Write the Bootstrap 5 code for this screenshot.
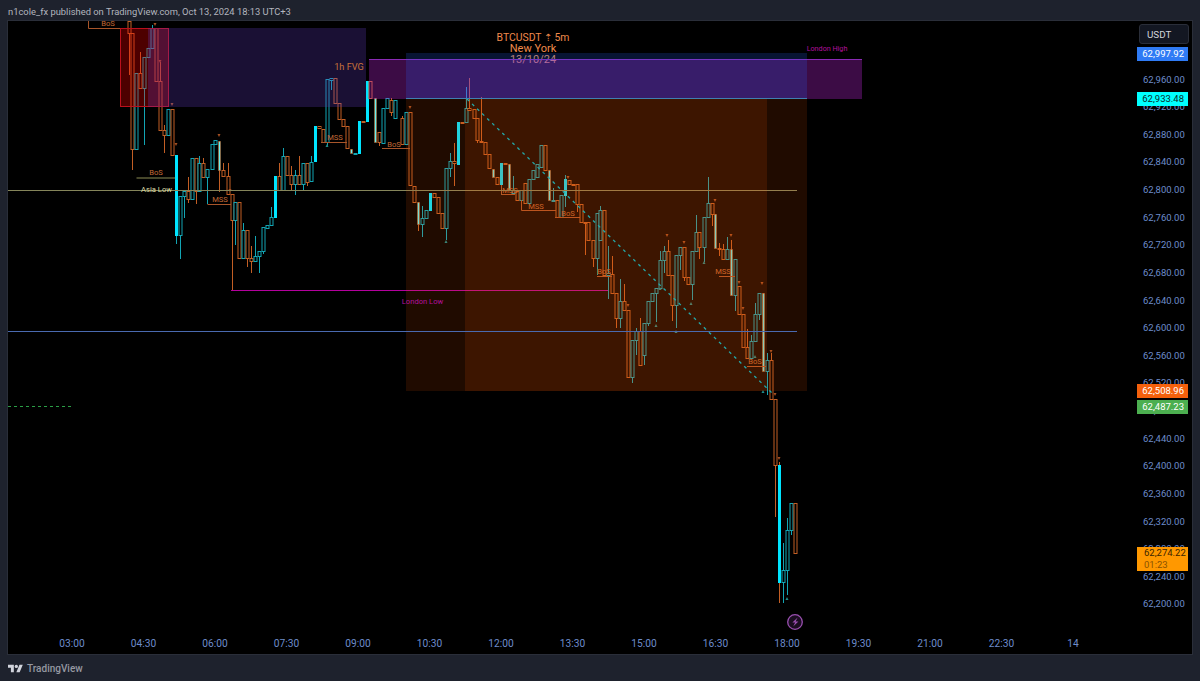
<!DOCTYPE html>
<html lang="en">
<head>
    <meta charset="UTF-8">
    <title>BTCUSDT 5m | TradingView</title>
    <link href="https://cdn.jsdelivr.net/npm/bootstrap@5.3.0/dist/css/bootstrap.min.css" rel="stylesheet">
    <style>
        body { background: #1e222d; font-family: Roboto, "Liberation Sans", sans-serif; overflow: hidden; }
        .publish-bar { height: 21px; padding-left: 8px; font-size: 9.4px; line-height: 23px; color: #b2b5be; }
        .chart-frame { width: 1184px; height: 633px; margin-left: 8px; background: #000; box-shadow: 0 0 0 1px #2a2e39; }
        .pane { width: 1118px; height: 609px; }
        .pane svg { display: block; overflow: visible; }
        .pane text { font-family: Roboto, "Liberation Sans", sans-serif; }
        .price-axis { width: 66px; padding-top: 51.6px; padding-left: 17px; font-size: 9.5px; color: #6d8ccb; }
        .axis-row { height: 27.63px; line-height: 14px; }
        .price-tag { position: absolute; left: 11px; width: 51px; height: 14px; padding-right: 4px; font-size: 9.5px; line-height: 14px; text-align: right; }
        .unit-btn { position: absolute; left: 13px; top: 3px; width: 50px; height: 20px; padding-left: 7px; font-size: 9.8px; line-height: 19px; color: #d1d4dc; background: #131722; border: 1px solid #2a2e39; border-radius: 3px; }
        .tag-blue { top: 26px; background: #2f7bf5; color: #fff; }
        .tag-cyan { top: 71px; background: #00ffff; color: #0a2a2a; }
        .tag-orange { top: 363px; background: #f4600c; color: #fff; }
        .tag-green { top: 379px; background: #4caf50; color: #fff; }
        .tag-amber { top: 526px; height: 24px; line-height: 12px; text-align: left; padding: 0 0 0 7px; white-space: nowrap; background: #ff9800; color: #3a2400; }
        .tag-amber span { color: #8a5200; }
        .time-axis { padding-left: 28.2px; height: 24px; font-size: 10.2px; line-height: 28px; color: #6d8ccb; }
        .time-axis span { width: 71.5px; flex: none; text-align: center; }
        .brand-bar { height: 27px; padding: 1px 0 0 8px; color: #9598a1; font-size: 10px; font-weight: 500; }
    </style>
</head>
<body>
    <div class="publish-bar text-nowrap">n1cole_fx published on TradingView.com, Oct 13, 2024 18:13 UTC+3</div>

    <div class="chart-frame d-flex flex-wrap">
        <div class="pane position-relative">
            <svg id="chart" width="1118" height="609" viewBox="8 21 1118 609" xmlns="http://www.w3.org/2000/svg"></svg>
        </div>
        <div class="price-axis position-relative" id="price-axis">
            <div class="unit-btn">USDT</div>
            <div class="price-tag tag-blue">62,997.92</div>
            <div class="price-tag tag-cyan">62,933.48</div>
            <div class="price-tag tag-orange">62,508.96</div>
            <div class="price-tag tag-green">62,487.23</div>
            <div class="price-tag tag-amber">62,274.22<br><span>01:23</span></div>
        </div>
        <div class="time-axis d-flex w-100">
            <span>03:00</span><span>04:30</span><span>06:00</span><span>07:30</span><span>09:00</span>
            <span>10:30</span><span>12:00</span><span>13:30</span><span>15:00</span><span>16:30</span>
            <span>18:00</span><span>19:30</span><span>21:00</span><span>22:30</span><span>14</span>
        </div>
    </div>

    <div class="brand-bar d-flex align-items-center gap-1">
        <svg width="15" height="11" viewBox="0 3 36 20" xmlns="http://www.w3.org/2000/svg" fill="#d1d4dc">
            <path d="M14 22H7V11H0V4h14v18zM28 22h-8l7.5-18h8L28 22z"/><circle cx="20" cy="8" r="4"/>
        </svg>
        <span>TradingView</span>
    </div>

    <script src="https://cdn.jsdelivr.net/npm/bootstrap@5.3.0/dist/js/bootstrap.bundle.min.js"></script>
    <script>
        // precios del eje derecho
        const axis = document.getElementById('price-axis');
        for (let p = 62960; p >= 62200; p -= 40) {
            const row = document.createElement('div');
            row.className = 'axis-row';
            row.textContent = p.toLocaleString('en-US') + '.00';
            axis.appendChild(row);
        }

        // velas en px: x, techo, base, tipo (d bajista, u alcista, s cyan lleno, p cyan palido), max, min
        const candles = [
            [129,21,33,'d',21,75],[132,33,149,'d',33,170],[136,73,149,'u',73,149],[140,73,88,'d',52,88],
            [144,57,88,'u',57,145],[148,48,57,'u',48,57],[152,28,48,'u',25,48],[156,28,81,'d',28,81],
            [160,81,130,'d',62,130],[164,130,135,'d',125,153],[168,109,135,'u',109,135],[172,109,155,'d',109,155],
            [176,155,235,'s',155,244],[180,196,235,'u',196,259],[184,191,196,'u',191,218],[188,191,199,'d',177,203],
            [192,158,199,'u',158,199],[196,158,191,'d',158,204],[199,163,191,'u',156,191],[203,163,177,'d',158,177],
            [207,169,177,'u',169,204],[212,144,169,'u',144,169],[215,140,144,'u',140,144],[219,141,170,'p',141,192],
            [223,170,176,'d',163,176],[228,176,194,'d',163,194],[232,194,220,'d',194,290],[235,202,220,'u',202,245],
            [239,202,258,'d',202,258],[243,230,258,'u',223,258],[247,230,258,'d',230,267],[251,258,261,'d',246,273],
            [255,256,261,'u',236,261],[259,251,256,'u',251,273],[263,227,251,'u',227,254],[267,225,228,'u',225,228],
            [271,217,225,'u',207,225],[275,176,217,'s',176,217],[279,176,190,'d',163,190],[283,156,190,'u',148,190],
            [287,156,175,'d',156,175],[291,175,184,'d',166,191],[295,175,184,'u',170,195],[299,175,184,'d',156,184],
            [303,163,184,'u',163,190],[307,163,182,'d',163,186],[311,162,181,'u',156,181],[315,126,161,'s',126,161],
            [319,126,128,'d',126,128],[323,129,142,'d',129,142],[327,79,142,'u',79,146],[331,78,80,'u',78,90],
            [335,78,103,'d',78,103],[339,103,119,'d',103,119],[343,119,126,'d',119,126],[347,126,148,'d',126,148],
            [351,149,153,'p',149,153],[355,153,154,'u',153,154],[359,121,153,'s',121,153],[363,121,122,'d',121,122],
            [367,81,121,'s',81,121],[370,81,98,'d',81,98],[375,98,142,'p',98,142],[379,132,142,'d',132,146],
            [383,108,143,'u',108,143],[387,98,108,'u',98,108],[391,100,112,'d',98,116],[395,100,118,'u',100,118],
            [402,118,144,'d',116,144],[406,112,144,'u',112,144],[410,112,185,'d',112,185],[414,186,202,'d',186,202],
            [418,202,224,'p',202,231],[422,218,224,'u',206,237],[426,210,218,'u',210,218],[430,193,210,'s',193,210],
            [434,193,197,'d',193,197],[438,197,213,'d',197,213],[442,213,228,'d',213,228],[446,168,228,'u',168,240],
            [450,161,168,'u',153,177],[454,161,163,'d',143,186],[458,122,164,'s',122,164],[462,122,123,'d',122,123],
            [466,108,122,'u',87,122],[469,108,110,'d',78,110],[474,109,118,'d',109,118],[477,118,140,'d',118,143],
            [481,141,142,'d',97,143],[485,142,154,'d',142,154],[489,154,168,'d',154,168],[493,169,177,'p',169,177],
            [497,177,184,'d',177,184],[501,163,184,'s',163,195],[505,163,164,'d',163,164],[509,164,190,'p',164,190],
            [513,190,193,'u',176,193],[517,191,200,'d',191,200],[521,190,200,'u',190,208],[525,183,203,'d',183,203],
            [529,179,203,'u',179,203],[533,170,179,'u',170,179],[537,164,177,'u',164,177],[541,145,167,'u',145,167],
            [545,145,170,'d',145,170],[549,170,200,'p',170,200],[553,200,201,'u',188,202],[557,200,217,'d',200,217],
            [561,195,217,'u',195,217],[565,179,195,'s',175,207],[569,180,184,'d',180,184],[573,184,185,'d',184,185],
            [577,184,204,'d',184,212],[581,204,222,'d',204,222],[585,222,223,'d',222,255],[588,222,240,'d',222,240],
            [593,240,258,'d',240,267],[597,213,258,'u',213,275],[600,210,240,'u',206,240],[604,210,275,'d',210,275],
            [608,273,275,'u',246,299],[612,274,293,'d',256,293],[616,293,318,'d',293,328],[620,301,318,'u',279,328],
            [624,301,310,'d',284,310],[628,310,377,'d',310,377],[632,340,377,'u',340,383],[636,331,340,'u',328,355],
            [640,331,365,'d',318,365],[644,323,355,'u',323,365],[648,301,323,'u',301,326],[652,293,301,'u',293,301],
            [656,288,293,'u',288,322],[660,260,288,'u',251,288],[664,251,260,'u',246,273],[668,251,275,'d',240,275],
            [672,275,305,'d',275,321],[676,255,305,'u',255,328],[680,247,255,'u',247,270],[684,247,277,'d',247,281],
            [688,277,284,'d',277,284],[692,251,284,'u',251,300],[696,232,251,'u',215,251],[699,232,247,'d',232,259],
            [704,217,247,'u',217,262],[708,203,217,'u',177,217],[712,203,214,'d',203,226],[715,214,248,'p',214,248],
            [719,248,249,'d',243,256],[723,249,259,'d',244,259],[727,249,259,'u',237,259],[731,249,295,'p',240,295],
            [735,259,295,'u',259,311],[739,286,314,'d',286,314],[743,314,347,'d',314,347],[747,347,358,'d',329,358],
            [751,341,358,'u',335,358],[755,314,341,'u',303,341],[759,293,314,'u',293,320],[763,293,371,'p',293,371],
            [767,360,371,'u',353,395],[771,360,399,'d',353,399],[775,399,465,'d',399,517],[779,465,582,'s',462,603],
            [783,570,582,'u',543,603],[787,530,570,'u',518,595],[791,503,530,'u',503,535],[795,503,553,'d',503,553]
        ];

        const ORANGE = '#c25e24', TEAL = '#12a5b4';
        let velas = '';
        candles.forEach(([x, top, bot, tipo, hi, lo]) => {
            const px = Math.round(x) + 0.5;
            const borde = tipo === 'd' || tipo === 'p' ? ORANGE : TEAL;
            const mecha = tipo === 's' && x === 779 ? ORANGE : borde;
            const relleno = tipo === 's' ? '#00e5ff' : tipo === 'p' ? '#66f0f0' : '#000';
            const ancho = tipo === 'u' || tipo === 'd' ? 3 : 2;
            const trazo = tipo === 's' ? '#00e5ff' : tipo === 'p' ? 'rgba(194,94,36,.55)' : borde;
            velas += `<line x1="${px}" x2="${px}" y1="${hi}" y2="${lo}" stroke="${mecha}"/>`;
            velas += `<rect x="${px - ancho / 2}" y="${top + 0.5}" width="${ancho}" height="${bot - top}" fill="${relleno}" stroke="${trazo}"/>`;
        });

        // marcas pequenas arriba y abajo de las velas
        const marcasArriba = [[155,25],[160,62],[172,105],[176,145],[219,136],[230,191],[410,108],[568,178],[628,306],[667,236],[684,243],[715,201],[731,236],[739,283],[743,309],[762,284],[771,352],[775,395],[779,459]];
        const marcasAbajo = [[327,145],[446,241],[656,325],[660,288],[676,331],[691,303],[704,262],[755,356],[763,391],[787,598]];
        let marcas = '';
        marcasArriba.forEach(([x, y]) => { marcas += `<path d="M${x - 1.5} ${y - 2}h3l-1.5 3z" fill="#a34f22"/>`; });
        marcasAbajo.forEach(([x, y]) => { marcas += `<path d="M${x - 1.5} ${y + 2}h3l-1.5-3z" fill="#1f8a88"/>`; });

        // etiquetas BoS / MSS con su linea
        const estructuras = [
            ['BoS', 108, 26, 'M88.5 21v7.5H129'], ['BoS', 156, 175, 'M136.5 178H175', '#8c8c55'],
            ['MSS', 220, 202, 'M207.5 204.5H231'], ['MSS', 335, 140, 'M321 142.5H347'],
            ['BoS', 394, 147, 'M382 148.5H410'], ['MSS', 510, 193, 'M501.5 185v9.5H515'],
            ['MSS', 536, 209, 'M521.5 200v10.5H556'], ['BoS', 568, 216, 'M555 217.5H580'],
            ['BoS', 604, 274, 'M597 276.5H612'], ['MSS', 723, 274, 'M719 276.5H735'], ['BoS', 755, 364, 'M747 366.5H766']
        ];
        let estr = '';
        estructuras.forEach(([txt, x, y, d, color]) => {
            estr += `<path d="${d}" fill="none" stroke="${color || '#a8552a'}"/>`;
            estr += `<text x="${x}" y="${y}" text-anchor="middle" font-size="7.6" fill="#c26a36">${txt}</text>`;
        });

        document.getElementById('chart').innerHTML = `
            <g text-anchor="middle" fill="#f08a4c">
                <text x="533" y="41" font-size="10.4">BTCUSDT ⇡ 5m</text>
                <text x="533" y="52" font-size="11">New York</text>
                <text x="533" y="63" font-size="11" fill="#d98a5a">13/10/24</text>
            </g>
            ${velas}${marcas}${estr}
            <line x1="8" x2="797" y1="190.5" y2="190.5" stroke="#85855a"/>
            <line x1="231" x2="608" y1="290.5" y2="290.5" stroke="#b3009c"/>
            <line x1="8" x2="72" y1="406.5" y2="406.5" stroke="#2b9e46" stroke-dasharray="3 3"/>
            <rect x="120.5" y="28.5" width="48" height="78" fill="rgba(255,0,0,.3)" stroke="#bb101c"/>
            <rect x="148" y="28" width="218" height="79" fill="rgba(100,60,200,.26)"/>
            <rect x="369" y="59" width="493" height="40" fill="rgba(200,40,230,.3)"/>
            <line x1="369" x2="862" y1="59.5" y2="59.5" stroke="#8a2ab4"/>
            <rect x="406" y="53" width="401" height="45" fill="rgba(41,98,255,.2)"/>
            <line x1="406" x2="807" y1="98.5" y2="98.5" stroke="#3f7fb0"/>
            <rect x="406" y="99" width="401" height="292" fill="rgba(255,90,0,.125)"/>
            <rect x="465" y="99" width="302" height="292" fill="rgba(255,90,0,.135)"/>
            <line x1="8" x2="797" y1="331.5" y2="331.5" stroke="#4a6ab0"/>
            <line x1="467" y1="99" x2="772" y2="393" stroke="#24a8a8" stroke-width="1.3" stroke-dasharray="3 4"/>
            <text x="349" y="70" text-anchor="middle" font-size="9.2" fill="#c8703a">1h FVG</text>
            <text x="156.5" y="192" text-anchor="middle" font-size="7.6" fill="#dcdca6">Asia Low</text>
            <text x="827" y="51" text-anchor="middle" font-size="7.2" fill="#b5109f">London High</text>
            <text x="422.5" y="304" text-anchor="middle" font-size="7.6" fill="#b5109f">London Low</text>
            <circle cx="795" cy="622" r="7.3" fill="#1a0d20" stroke="#9a4fb0" stroke-width="1.3"/>
            <path d="M797.6 617.6l-5.2 5h2.8l-2 3.8 5.2-5h-2.8z" fill="#9a4fb0"/>`;
    </script>
</body>
</html>
